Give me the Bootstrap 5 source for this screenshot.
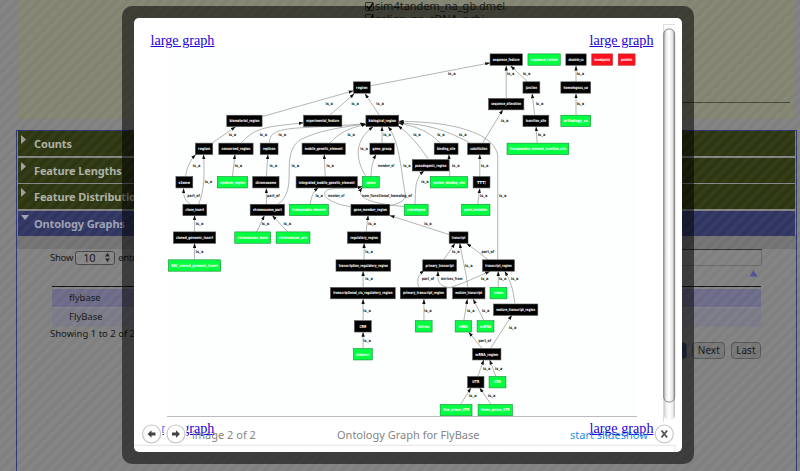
<!DOCTYPE html>
<html lang="en">
<head>
<meta charset="utf-8">
<title>Ontology Graph for FlyBase</title>
<link href="https://cdn.jsdelivr.net/npm/bootstrap@5.3.0/dist/css/bootstrap.min.css" rel="stylesheet">
<style>
body{width:800px;height:471px;background:#808080;font-family:"Noto Sans","Open Sans",sans-serif;font-size:9.5px;line-height:14px;color:#151515}
.page{width:800px;height:471px}
.tracks{height:119px;margin:0 7px 11px 17px;background:#828370;padding-left:348px;font-size:11px;line-height:12.500px;color:#1c1c17}
.tracks hr{margin:76.500px 3px 0 0;border-top:1.5px solid #45463b;opacity:1}
.tick{width:9px;height:9px;border:1px solid #333;border-radius:1px;margin-right:1px}
.panelbox{height:345px;margin:0 3px 0 16px;border:1px solid #2d3672}
.sect{height:25px;margin:0 1px 1.6px 1px;background:#2c3610;color:#aeb0a6;font-weight:700;font-size:11px;letter-spacing:-.12px;padding-left:16px;box-shadow:0 1px #858585}
.sect span{position:relative;top:.6px}
.sect.open{background:#2f3560;color:#9ea1b4;box-shadow:none;margin-bottom:0}
.tri{position:absolute;left:3px;top:4px}
.shade{background:#727272;height:13.5px}
.body2{padding:0 34px 0 33px}
.pick{width:40px;height:14px;border:1px solid #444;border-radius:3px;background:#858585;font-size:11px;line-height:12px;padding:0 4px 0 7px;margin:0 3px 0 2px}
.show{letter-spacing:-.25px}
.find{width:200px;height:17px;border:1px solid #686868;border-top:1px solid #303030}
.rows{margin:0 1px 0 2px;border-top:1px solid #111;padding-top:2px}
.rows div{height:19px;line-height:18px;padding-left:17px;background:#7a7a87}
.rows div:first-child{background:#6b6b88;border-bottom:1px solid #828290}
.pg{height:16.5px;border:1px solid #555;border-radius:4px;line-height:14px;padding:0 4.500px;background:#767676;font-size:10px}
.pg.now{background:#2f3a66;padding:0 4px}
.pgs{gap:5.500px;padding-right:1px;margin-top:1px}
.stripes{position:absolute;inset:0;background:repeating-linear-gradient(135deg,rgba(255,255,255,.04) 0,rgba(255,255,255,.035) 2px,rgba(255,255,255,0) 4px,rgba(255,255,255,0) 6px,rgba(255,255,255,.04) 7.8px)}
.frame{position:absolute;left:122px;top:5.5px;width:571.5px;height:458px;background:rgba(0,0,0,.53);border-radius:10px;padding:12px}
.inner{position:relative;height:434.5px;background:#fff;border-radius:5px;overflow:hidden}
.lg{font:14.2px "Liberation Serif",serif;line-height:16px;color:#2200dd;text-decoration:underline}
.toplinks{padding:14px 28px 0 16.5px;height:32.5px}
.graph{display:block;margin-left:33px;border-bottom:1px solid #bbb}
.bottomlinks{padding:3px 28px 0 16.5px}
.foot{position:absolute;left:0;right:0;bottom:0;height:36px}
.foot svg{display:block}
.cap{position:absolute;top:11.500px;font-size:11px;line-height:14px;color:#858585;white-space:nowrap}
.bar{position:absolute;left:529px;top:6px;width:13px;height:398px}
.nd text{font:bold 4px "DejaVu Sans",sans-serif;fill:#fff}
.lb text{font:bold 4px "DejaVu Sans",sans-serif;fill:#222}
.ed path{fill:none;stroke:#777;stroke-width:.55}
</style>
</head>
<body class="position-relative overflow-hidden">
<div class="page">
  <div class="tracks overflow-hidden">
    <div class="d-flex align-items-center"><svg class="tick" viewBox="0 0 9 9"><path d="M1 4l3 4 5-8" fill="none" stroke="#000" stroke-width="2"/></svg><span>sim4tandem_na_gb.dmel</span></div>
    <div class="d-flex align-items-center"><svg class="tick" viewBox="0 0 9 9"><path d="M1 4l3 4 5-8" fill="none" stroke="#000" stroke-width="2"/></svg><span>splign_na_cDNA_ncbi</span></div>
    <hr>
  </div>
  <div class="panelbox pt-0">
    <div class="sect position-relative d-flex align-items-center"><svg class="tri" width="6" height="9"><path d="M0 0L5 4.5 0 9z" fill="#a0a098"/></svg><span>Counts</span></div>
    <div class="sect position-relative d-flex align-items-center"><svg class="tri" width="6" height="9"><path d="M0 0L5 4.5 0 9z" fill="#a0a098"/></svg><span>Feature Lengths</span></div>
    <div class="sect position-relative d-flex align-items-center"><svg class="tri" width="6" height="9"><path d="M0 0L5 4.5 0 9z" fill="#a0a098"/></svg><span>Feature Distribution</span></div>
    <div class="sect open position-relative d-flex align-items-center"><svg class="tri" width="9" height="6"><path d="M0 0H8L4 5z" fill="#a0a0b0"/></svg><span>Ontology Graphs</span></div>
    <div class="shade"></div>
    <div class="body2">
      <div class="d-flex justify-content-between">
        <div class="show d-flex align-items-center">Show<span class="pick d-flex justify-content-between align-items-center">10<svg width="5" height="9"><path d="M0 3.5L2.5 0 5 3.5zM0 5.5L2.5 9 5 5.5z" fill="#222"/></svg></span>entries</div>
        <div class="find"></div>
      </div>
      <div class="d-flex justify-content-end pe-1"><svg width="9" height="20"><path d="M.5 10.500L4.500 4 8.500 10.500z" fill="#4e4f94"/></svg></div>
      <div class="rows"><div>flybase</div><div>FlyBase</div></div>
      <div>Showing 1 to 2 of 2 entries</div>
      <div class="pgs d-flex justify-content-end"><span class="pg now">1</span><span class="pg">Next</span><span class="pg">Last</span></div>
    </div>
  </div>
</div>
<div class="stripes"></div>
<div class="frame">
  <div class="inner">
    <div class="toplinks d-flex justify-content-between"><span class="lg">large graph</span><span class="lg">large graph</span></div>
    <svg class="graph" id="graph" width="470" height="367" viewBox="167 50 470 367">
      <defs><marker id="tip" viewBox="0 0 6 4" refX="5.500" refY="2" markerWidth="5" markerHeight="3.600" markerUnits="userSpaceOnUse" orient="auto"><path d="M0 0L6 2 0 4z" fill="#111"/></marker></defs>
      <rect x="167" y="50" width="470" height="367" fill="#fcfffe"/>
      <g class="ed"></g><g class="nd"></g><g class="lb"></g>
    </svg>
    <div class="bottomlinks d-flex justify-content-between"><span class="lg">large graph</span><span class="lg">large graph</span></div>
    <svg class="bar" viewBox="0 0 13 398">
      <defs><linearGradient id="sb"><stop offset="0" stop-color="#aaa"/><stop offset=".25" stop-color="#eee"/><stop offset=".5" stop-color="#fff"/><stop offset=".8" stop-color="#e2e2e2"/><stop offset="1" stop-color="#888"/></linearGradient></defs>
      <path d="M.5 398V.5H12" fill="none" stroke="#ddd"/>
      <rect x="1" y="10" width="11" height="386" rx="5" fill="url(#sb)" opacity=".6"/>
      <rect x=".7" y="5" width="11" height="373" rx="5" fill="url(#sb)" stroke="#888" stroke-width="1"/>
    </svg>
    <div class="foot">
      <svg width="548" height="36" viewBox="134 416 548 36">
        <path d="M134 445.300H675V452" fill="none" stroke="#ddd" stroke-width=".8"/>
        <path d="M142 423H162.500V444H142zM164.500 423H186.500V444H164.500z" fill="#fff"/>
        <g fill="#fff" stroke="#c6c6c6" stroke-width="1.200"><circle cx="151.600" cy="434" r="9"/><circle cx="175.900" cy="434" r="9"/><circle cx="664.300" cy="434" r="9"/></g>
        <g fill="#444"><path d="M147.500 434l4-3.800v2.200h4v3.200h-4v2.200z"/><path d="M180 434l-4-3.800v2.200h-4v3.200h4v2.200z"/></g>
        <path d="M661.500 430.500l5.600 7m0-7l-5.600 7" stroke="#555" stroke-width="1.900"/>
      </svg>
      <span class="cap" style="left:58px">image 2 of 2</span>
      <span class="cap" style="left:203px">Ontology Graph for FlyBase</span>
      <span class="cap" style="left:436px;color:#2492e6">start slideshow</span>
    </div>
  </div>
</div>
<script src="https://cdn.jsdelivr.net/npm/bootstrap@5.3.0/dist/js/bootstrap.bundle.min.js"></script>
<script>
// nodes: left, right, centre y, label, colour key
const nodes=[
[490,523,59.5,'sequence_feature'],[528,561,59.5,'sequence_variant','g'],[566,587,59.5,'obsolete_so'],[592,613.5,59.5,'breakpoint','r'],[618.5,636,59.5,'protein','r'],
[353,370.5,87.5,'region'],[523,540.5,87.5,'junction'],[561,591.5,87.5,'homologous_so'],[488.5,524.5,104.2,'sequence_alteration'],
[226,262,121,'biomaterial_region'],[303,342,121,'experimental_feature'],[365.5,399,121,'biological_region'],[523,549.5,121,'insertion_site'],[561,591.5,121,'orthology_so','g'],
[194.5,212.5,149,'region'],[218,253,149,'conserved_region'],[259.5,278,149,'replicon'],[301.5,345.5,149,'mobile_genetic_element'],[369.5,394.5,149,'gene_group'],[434,458.5,149,'binding_site'],[467.5,490.5,149,'substitution'],[507,569.5,149,'transposable_element_insertion_site','g'],
[412,449.5,165.5,'pseudogenic_region'],
[175,192.5,182.5,'clone'],[216.5,247.5,182.5,'syntenic_region','g'],[252,279,182.5,'chromosome'],[295.5,357.5,182.5,'integrated_mobile_genetic_element'],[362,379.5,182.5,'gene','g'],[430,468,182.5,'protein_binding_site','g'],[473,490.5,182.5,'TTT/'],
[182,206.5,210.3,'clone_insert'],[249.5,284.5,210.3,'chromosome_part'],[289,328.5,210.3,'transposable_element','g'],[350.5,390,210.3,'gene_member_region'],[404,428.5,210.3,'pseudogene','g'],[461.5,490.5,210.3,'point_mutation','g'],
[172.5,215.5,238,'cloned_genomic_insert'],[234,270.5,238,'chromosome_band','g'],[275.5,310,238,'chromosome_arm','g'],[347,381,238,'regulatory_region'],[449,468.5,238,'transcript'],
[167.5,220.5,266,'BAC_cloned_genomic_insert','g'],[335.5,391,266,'transcription_regulatory_region'],[422.5,457,266,'primary_transcript'],[482.5,515,266,'transcript_region'],
[330,395.5,293.7,'transcriptional_cis_regulatory_region'],[400,447,293.7,'primary_transcript_region'],[452.5,485.5,293.7,'mature_transcript'],[490,507.5,293.7,'exon','g'],[493.5,538.5,310.3,'mature_transcript_region'],
[354,371.5,327,'CRM'],[415,432.5,327,'intron','g'],[455,472,327,'mRNA','g'],[477,494.5,327,'ncRNA','g'],
[353,372.5,355,'enhancer','g'],[472.5,501.5,355,'mRNA_region'],[467.5,484.5,383,'UTR'],[489,506.5,383,'CDS','g'],[440,472.5,411,'five_prime_UTR','g'],[478,513,411,'three_prime_UTR','g']];
// each edge runs from the child up to its parent
const edges=['M370 86L490 63','M261 117L353 91','M330 115L354 94','M379 115L365 94','M506.500 98V66','M528 82L511 66','M576.500 82V66','M576.500 115V94','M535 115L532.500 94','M537.500 143L536.500 127','M483 143L503 110',
'M212 143L235 127','M241 143C256 126 270 127 303 123','M269 143C270 125 290 130 365 124','M277 205C300 190 278 155 300 140C320 130 340 128 365 124','M330 143C340 132 350 128 366 124.500',
'M366 177C354 158 355 140 373 127','M371 177C371 168 373 160 376 155','M382 143V127','M390 206C403 203 406 200 405 193C401 170 399 140 388 127','M428 159C418 144 410 135 398 126','M440 143C430 132 415 126 399 123.500','M470 143C445 130 430 125 399 123','M498 260V160C500 140 470 122 399 121.500',
'M185 177C186 168 190 160 195 155','M198 205C204 190 204 175 203 155','M190 205C183 200 183 195 183 189','M194 233V216','M194 260V244','M232 177L234.500 155','M266 177L267.500 155','M266 205V189','M256 233L264 216','M288 233L272 216',
'M325 177L324 155','M310 205C311 197 313 192 318 188','M350 207C330 204 318 195 328 190C338 187 350 190 362 187','M404 207C370 204 355 198 362 188','M415 205C416 190 414 180 424 171','M450 177L449 155','M480 177V155','M478 205L480 189',
'M366 233L368 216','M449 235L390 216','M364 260V244','M363 288V272','M363 321V300','M363 349V333','M444 260L455 244','M468 288C466 270 462 258 460 244','M488 260L467 244','M419 288C416 280 419 275 424 271','M456 289C437 288 438 282 438 272','M447 289C460 286 480 276 490 272','M498.500 288V272','M515 304C514 290 510 280 505 272','M424 321V300','M464 321L467.500 300','M484 321L473.500 300','M482 349L469 333','M491 349L512 316','M478 377L484 361','M496 377L490 361','M461 405L471 389','M491 405L480 389'];
// relation labels: x, y, text (is_a unless given)
const labels=[[452,74],[511,74],[527,74],[581,74],[329,104],[355,104],[380,104],[540,104],[581,104],[505,121],
[232,135],[263,135],[282,135],[351,135],[387,135],[417,135],[441,135],[463,135],[542,135],[364,149],[196,166],[238,166],[273,166],[295,166],[330,166],[386,166,'member_of'],[407,166],[456,166],[485,166],
[208,182],[425,182],[193,196,'part_of'],[273,196,'part_of'],[319,196],[336,196,'member_of'],[387,196,'non_functional_homolog_of'],[484,196],[503,196],
[199,224],[265,224],[287,224],[372,224],[428,224],[199,252],[369,252],[456,252],[488,252,'part_of'],[369,279],[428,279,'part_of'],[452,279,'derives_from'],[485,279],[503,279],[515,279],[469,266],
[367,311],[428,311],[471,311],[486,311],[367,341],[485,341,'part_of'],[513,328],[487,369],[499,369],[473,397],[492,397]];
const el=(t,a,p,s)=>{const e=document.createElementNS('http://www.w3.org/2000/svg',t);for(const k in a)e.setAttribute(k,a[k]);if(s)e.textContent=s;p.append(e)};
const [eg,ng,lg]=['.ed','.nd','.lb'].map(q=>document.querySelector('#graph '+q));
edges.forEach(d=>el('path',{d,'marker-end':'url(#tip)'},eg));
nodes.forEach(([a,b,y,s,c])=>{
  el('rect',{x:a+.3,y:y-5.600,width:b-a-.6,height:11.4,fill:c=='g'?'#00ff40':c=='r'?'#ff101c':'#000',stroke:c=='g'?'#178b37':c=='r'?'#a33':'#555','stroke-width':.6},ng);
  const w=Math.min(b-a-6,s.length*2.3);
  el('text',{x:(a+b)/2-w/2,y:y+1.400,textLength:w,lengthAdjust:'spacingAndGlyphs'},ng,s)});
labels.forEach(([x,y,s='is_a'])=>{const w=s=='is_a'?7.5:s.length>12?50:s.length*1.8;el('text',{x:x-w/2,y:y+1.400,textLength:w,lengthAdjust:'spacingAndGlyphs'},lg,s)});
</script>
</body>
</html>
